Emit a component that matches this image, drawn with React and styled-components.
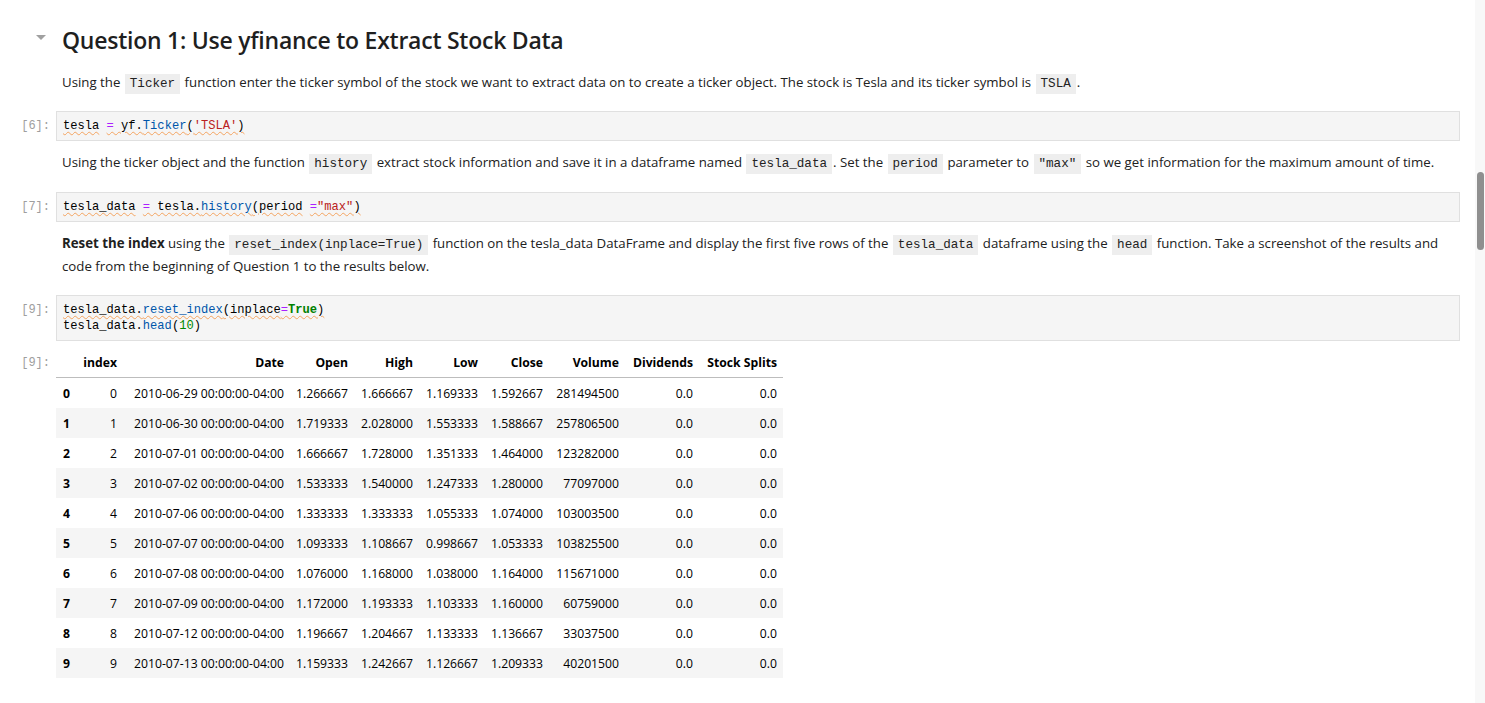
import React from 'react'
import styled, { createGlobalStyle } from 'styled-components'

const GlobalStyle = createGlobalStyle`
  html, body {
    margin: 0;
    padding: 0;
    background: #ffffff;
  }
  body {
    font-family: "Open Sans", "Noto Sans", sans-serif;
    color: #212121;
    overflow: hidden;
  }
`

const rows = [
  ['2010-06-29', '1.266667', '1.666667', '1.169333', '1.592667', '281494500'],
  ['2010-06-30', '1.719333', '2.028000', '1.553333', '1.588667', '257806500'],
  ['2010-07-01', '1.666667', '1.728000', '1.351333', '1.464000', '123282000'],
  ['2010-07-02', '1.533333', '1.540000', '1.247333', '1.280000', '77097000'],
  ['2010-07-06', '1.333333', '1.333333', '1.055333', '1.074000', '103003500'],
  ['2010-07-07', '1.093333', '1.108667', '0.998667', '1.053333', '103825500'],
  ['2010-07-08', '1.076000', '1.168000', '1.038000', '1.164000', '115671000'],
  ['2010-07-09', '1.172000', '1.193333', '1.103333', '1.160000', '60759000'],
  ['2010-07-12', '1.196667', '1.204667', '1.133333', '1.136667', '33037500'],
  ['2010-07-13', '1.159333', '1.242667', '1.126667', '1.209333', '40201500'],
]

const columns = [
  { key: 'label', width: 20 },
  { key: 'index', width: 47, title: 'index' },
  { key: 'date', width: 167, title: 'Date' },
  { key: 'open', width: 64, title: 'Open' },
  { key: 'high', width: 65, title: 'High' },
  { key: 'low', width: 65, title: 'Low' },
  { key: 'close', width: 65, title: 'Close' },
  { key: 'volume', width: 76, title: 'Volume' },
  { key: 'div', width: 74, title: 'Dividends' },
  { key: 'splits', width: 84, title: 'Stock Splits' },
]

function App() {
  return (
    <>
      <GlobalStyle />
      <Page>
        <Notebook>
          <HeadingCell>
            <Collapser>
              <Caret />
            </Collapser>
            <Heading>Question 1: Use yfinance to Extract Stock Data</Heading>
          </HeadingCell>

          <MarkdownCell $gap={15}>
            <Prompt />
            <Prose>
              Using the <InlineCode>Ticker</InlineCode> function enter the ticker symbol of the stock we want to extract data on to create a ticker object. The stock is Tesla and its ticker symbol is <InlineCode>TSLA</InlineCode>.
            </Prose>
          </MarkdownCell>

          <CodeCell $gap={17}>
            <Prompt>[6]:</Prompt>
            <Editor>
              <Line>
                <Squiggle>tesla</Squiggle> <Squiggle><Op>=</Op> yf.<Prop>Ticker</Prop>(<Str>'TSLA'</Str>)</Squiggle>
              </Line>
            </Editor>
          </CodeCell>

          <MarkdownCell>
            <Prompt />
            <Prose>
              Using the ticker object and the function <InlineCode>history</InlineCode> extract stock information and save it in a dataframe named <InlineCode>tesla_data</InlineCode>. Set the <InlineCode>period</InlineCode> parameter to <InlineCode>"max"</InlineCode> so we get information for the maximum amount of time.
            </Prose>
          </MarkdownCell>

          <CodeCell>
            <Prompt>[7]:</Prompt>
            <Editor>
              <Line>
                <Squiggle>tesla_data</Squiggle> <Squiggle><Op>=</Op> tesla.<Prop>history</Prop>(period</Squiggle> <Squiggle><Op>=</Op><Str>"max"</Str>)</Squiggle>
              </Line>
            </Editor>
          </CodeCell>

          <MarkdownCell>
            <Prompt />
            <Prose>
              <strong>Reset the index</strong> using the <InlineCode>reset_index(inplace=True)</InlineCode> function on the tesla_data DataFrame and display the first five rows of the <InlineCode>tesla_data</InlineCode> dataframe using the <InlineCode>head</InlineCode> function. Take a screenshot of the results and code from the beginning of Question 1 to the results below.
            </Prose>
          </MarkdownCell>

          <CodeCell $gap={17}>
            <Prompt>[9]:</Prompt>
            <Editor>
              <Line>
                <Squiggle>tesla_data.<Prop>reset_index</Prop>(inplace<Op>=</Op><Kw>True</Kw>)</Squiggle>
              </Line>
              <Line>
                tesla_data.<Prop>head</Prop>(<Num>10</Num>)
              </Line>
            </Editor>
          </CodeCell>

          <OutputCell>
            <Prompt>[9]:</Prompt>
            <Frame>
              <colgroup>
                {columns.map((c) => (
                  <col key={c.key} style={{ width: c.width }} />
                ))}
              </colgroup>
              <thead>
                <tr>
                  {columns.map((c) => (
                    <HeadCell key={c.key}>{c.title || ''}</HeadCell>
                  ))}
                </tr>
              </thead>
              <tbody>
                {rows.map((r, i) => (
                  <BodyRow key={i} $striped={i % 2 === 1}>
                    <RowLabel>{i}</RowLabel>
                    <DataCell>{i}</DataCell>
                    <DataCell>{r[0]} 00:00:00-04:00</DataCell>
                    <DataCell>{r[1]}</DataCell>
                    <DataCell>{r[2]}</DataCell>
                    <DataCell>{r[3]}</DataCell>
                    <DataCell>{r[4]}</DataCell>
                    <DataCell>{r[5]}</DataCell>
                    <DataCell>0.0</DataCell>
                    <DataCell>0.0</DataCell>
                  </BodyRow>
                ))}
              </tbody>
            </Frame>
          </OutputCell>
        </Notebook>

        <ScrollTrack>
          <ScrollThumb />
        </ScrollTrack>
      </Page>
    </>
  )
}

export default App

const Page = styled.div`
  display: flex;
  width: 100vw;
  height: 100vh;
  box-sizing: border-box;
`

const Notebook = styled.main`
  flex: 1;
  padding: 24px 15px 0 0;
  display: flex;
  flex-direction: column;
`

const HeadingCell = styled.section`
  display: grid;
  grid-template-columns: 56px 1fr;
  align-items: center;
`

const Collapser = styled.div`
  display: flex;
  justify-content: flex-end;
  padding-right: 10px;
`

const Caret = styled.span`
  width: 0;
  height: 0;
  border-left: 5px solid transparent;
  border-right: 5px solid transparent;
  border-top: 5px solid #a0a0a0;
  margin-top: -5px;
`

const Heading = styled.h1`
  margin: 0 0 0 6px;
  font-size: 23px;
  font-weight: 600;
  line-height: 32px;
  color: #1f1f1f;
  letter-spacing: -0.25px;
`

const MarkdownCell = styled.section`
  display: grid;
  grid-template-columns: 56px 1fr;
  margin-top: ${(p) => p.$gap || 10}px;
`

const CodeCell = styled.section`
  display: grid;
  grid-template-columns: 56px 1fr;
  margin-top: ${(p) => p.$gap || 18}px;
`

const OutputCell = styled.section`
  display: grid;
  grid-template-columns: 56px 1fr;
  margin-top: 7px;
`

const Prompt = styled.div`
  font-family: "Liberation Mono", "DejaVu Sans Mono", monospace;
  font-size: 12px;
  color: #9e9e9e;
  text-align: right;
  padding: 7px 6px 0 0;
  line-height: 16px;
`

const Prose = styled.p`
  margin: 0;
  padding-left: 6px;
  font-size: 13.25px;
  line-height: 23px;
  color: #212121;
  strong {
    font-weight: 700;
  }
`

const InlineCode = styled.code`
  font-family: "Liberation Mono", "DejaVu Sans Mono", monospace;
  font-size: 12.6px;
  line-height: 1;
  background: #eeeeee;
  padding: 3px 5px;
  margin: 0 1px;
  color: #222;
`

const Editor = styled.div`
  background: #f5f5f5;
  border: 1px solid #e0e0e0;
  padding: 6px 6px;
  font-family: "Liberation Mono", "DejaVu Sans Mono", monospace;
  font-size: 12.1px;
  line-height: 16px;
  color: #000;
`

const Line = styled.div`
  white-space: pre;
  height: 16px;
`

const Squiggle = styled.span`
  text-decoration: underline wavy #f4a460;
  text-decoration-thickness: 1px;
  text-underline-offset: 2px;
`

const Op = styled.span`
  color: #aa22ff;
`

const Prop = styled.span`
  color: #0055aa;
`

const Str = styled.span`
  color: #ba2121;
`

const Kw = styled.span`
  color: #008000;
  font-weight: 700;
`

const Num = styled.span`
  color: #008800;
`

const Frame = styled.table`
  border-collapse: collapse;
  table-layout: fixed;
  width: 727px;
  font-size: 12.2px;
  color: #000;
`

const HeadCell = styled.th`
  text-align: right;
  font-weight: 700;
  padding: 0 6px;
  height: 29px;
  border-bottom: 1px solid #bdbdbd;
  white-space: nowrap;
`

const BodyRow = styled.tr`
  background: ${(p) => (p.$striped ? '#f5f5f5' : 'transparent')};
`

const RowLabel = styled.th`
  text-align: left;
  font-weight: 700;
  padding: 0 0 0 7px;
  height: 30px;
`

const DataCell = styled.td`
  text-align: right;
  padding: 0 6px;
  height: 30px;
  white-space: nowrap;
`

const ScrollTrack = styled.aside`
  width: 10px;
  background: #f8f8f8;
  position: relative;
`

const ScrollThumb = styled.div`
  position: absolute;
  top: 172px;
  left: 2px;
  width: 7px;
  height: 78px;
  border-radius: 4px;
  background: #8f8f8f;
`
